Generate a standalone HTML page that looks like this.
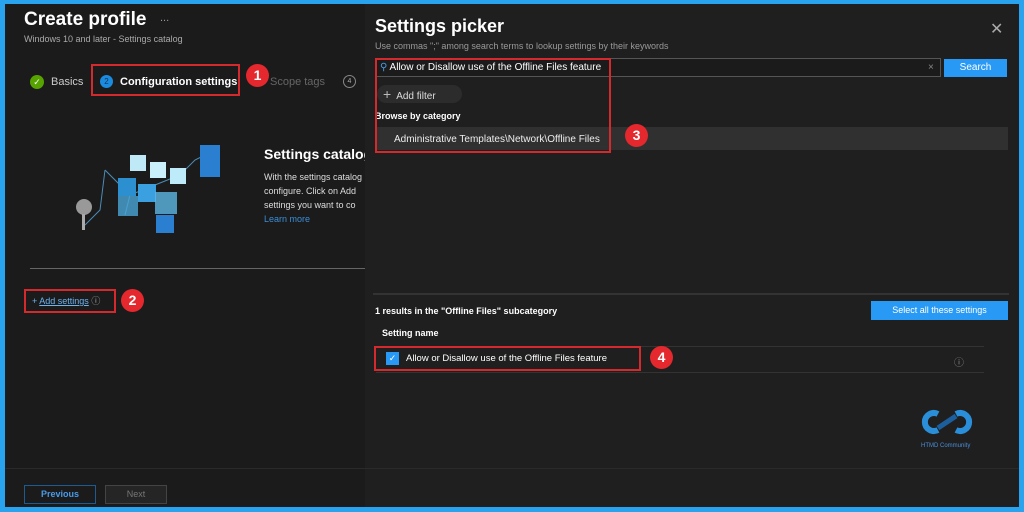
<!DOCTYPE html>
<html><head><style>
*{margin:0;padding:0;box-sizing:border-box}
body{width:1024px;height:512px;background:#2aa3ef;font-family:"Liberation Sans",sans-serif;overflow:hidden;position:relative}
.main{position:absolute;left:5px;top:4px;width:1014px;height:503px;background:#1b1b1b}
.a{position:absolute;white-space:nowrap}
.right{position:absolute;left:365px;top:4px;width:654px;height:503px;background:#1f1f1f}
.red{position:absolute;border:2px solid #d42a2e}
.badge{position:absolute;width:23px;height:23px;border-radius:50%;background:#e4282e;color:#fff;font-weight:bold;font-size:14px;text-align:center;line-height:23px}
</style></head><body>
<div class="main"></div>
<div class="a" style="left:24px;top:9px;font-size:19px;color:#fff;font-weight:bold">Create profile</div>
<div class="a" style="left:160px;top:12px;font-size:11px;color:#999">...</div>
<div class="a" style="left:24px;top:34px;font-size:9px;color:#aaa">Windows 10 and later - Settings catalog</div>
<div class="a" style="left:30px;top:75px;width:14px;height:14px;border-radius:50%;background:#57a300;color:#fff;font-size:9px;text-align:center;line-height:14px">✓</div>
<div class="a" style="left:51px;top:76px;font-size:11px;color:#ccc">Basics</div>
<div class="a" style="left:100px;top:75px;width:13px;height:13px;border-radius:50%;background:#1b8be0;color:#135;font-size:8px;text-align:center;line-height:13px">2</div>
<div class="a" style="left:120px;top:76px;font-size:11px;color:#fff;font-weight:bold">Configuration settings</div>
<div class="red" style="left:91px;top:64px;width:149px;height:32px"></div>
<div class="badge" style="left:246px;top:64px">1</div>
<div class="a" style="left:270px;top:76px;font-size:11px;color:#666">Scope tags</div>
<div class="a" style="left:343px;top:75px;width:13px;height:13px;border-radius:50%;border:1px solid #888;color:#aaa;font-size:7px;text-align:center;line-height:11px">4</div>
<svg class="a" style="left:70px;top:140px" width="155" height="95">
<g stroke="#4a8db8" stroke-width="1" fill="none"><polyline points="35,30 60,55 85,45 110,35 125,20 145,10"/><polyline points="35,30 30,70 15,85"/><polyline points="60,55 55,75"/></g>
<rect x="60" y="15" width="16" height="16" fill="#bfe9f7"/><rect x="80" y="22" width="16" height="16" fill="#c9f0fb"/><rect x="100" y="28" width="16" height="16" fill="#bdebf9"/>
<rect x="48" y="38" width="18" height="18" fill="#2c8fd0"/><rect x="68" y="44" width="18" height="18" fill="#3aa0e0"/><rect x="48" y="56" width="20" height="20" fill="#4aa6d8" opacity=".8"/><rect x="85" y="52" width="22" height="22" fill="#5cb8e4" opacity=".8"/><rect x="86" y="75" width="18" height="18" fill="#2a7fd0"/>
<rect x="130" y="5" width="20" height="32" fill="#2a7fd0"/>
<circle cx="14" cy="67" r="8" fill="#999"/><rect x="12" y="74" width="3" height="16" fill="#aaa"/></svg>
<div class="a" style="left:264px;top:146px;font-size:14px;color:#fff;font-weight:bold">Settings catalog</div>
<div class="a" style="left:264px;top:170px;font-size:9px;color:#ddd;line-height:14px">With the settings catalog<br>configure. Click on Add<br>settings you want to co</div>
<div class="a" style="left:264px;top:214px;font-size:9px;color:#3a8fd8">Learn more</div>
<div class="a" style="left:30px;top:268px;width:335px;height:1px;background:#666"></div>
<div class="a" style="left:32px;top:294px;font-size:9px;color:#6db3f0">+ <u>Add settings</u> <span style="color:#aaa">ⓘ</span></div>
<div class="red" style="left:24px;top:289px;width:92px;height:24px"></div>
<div class="badge" style="left:121px;top:289px">2</div>
<div class="a" style="left:24px;top:485px;width:72px;height:19px;border:1px solid #1d5b90;color:#4a9be8;font-size:9px;font-weight:bold;text-align:center;line-height:17px">Previous</div>
<div class="a" style="left:105px;top:485px;width:62px;height:19px;border:1px solid #444;background:#252525;color:#777;font-size:9px;text-align:center;line-height:17px">Next</div>
<div class="right"></div>
<div class="a" style="left:5px;top:468px;width:1014px;height:1px;background:#2a2a2a"></div>
<div class="a" style="left:375px;top:16px;font-size:18px;color:#fff;font-weight:bold">Settings picker</div>
<div class="a" style="left:990px;top:19px;font-size:16px;color:#aaa">✕</div>
<div class="a" style="left:375px;top:41px;font-size:9px;color:#999">Use commas ";" among search terms to lookup settings by their keywords</div>
<div class="a" style="left:375px;top:58px;width:566px;height:19px;border:1px solid #555;background:#1b1b1b"></div>
<div class="a" style="left:380px;top:62px;font-size:10px;color:#fff"><span style="color:#4a9be8">⚲</span> Allow or Disallow use of the Offline Files feature</div>
<div class="a" style="left:928px;top:62px;font-size:10px;color:#888">×</div>
<div class="a" style="left:944px;top:59px;width:63px;height:18px;background:#2899f5;color:#fff;font-size:10px;text-align:center;line-height:18px">Search</div>
<div class="a" style="left:377px;top:85px;width:85px;height:18px;border-radius:9px;background:#2c2c2c;color:#ddd;font-size:10px;line-height:18px;padding-left:6px"><span style="font-size:14px;color:#bbb">+</span>&nbsp; Add filter</div>
<div class="a" style="left:375px;top:111px;font-size:9px;color:#fff;font-weight:bold">Browse by category</div>
<div class="a" style="left:376px;top:127px;width:632px;height:23px;background:#303030"></div>
<div class="a" style="left:394px;top:134px;font-size:10px;color:#eee">Administrative Templates\Network\Offline Files</div>
<div class="red" style="left:375px;top:58px;width:236px;height:95px"></div>
<div class="badge" style="left:625px;top:124px">3</div>
<div class="a" style="left:373px;top:293px;width:636px;height:2px;background:#333"></div>
<div class="a" style="left:375px;top:306px;font-size:9px;color:#fff;font-weight:bold">1 results in the "Offline Files" subcategory</div>
<div class="a" style="left:871px;top:301px;width:137px;height:19px;background:#2899f5;color:#fff;font-size:9px;text-align:center;line-height:19px">Select all these settings</div>
<div class="a" style="left:382px;top:328px;font-size:9px;color:#fff;font-weight:bold">Setting name</div>
<div class="a" style="left:376px;top:346px;width:608px;height:1px;background:#333"></div>
<div class="a" style="left:386px;top:352px;width:13px;height:13px;background:#2899f5;color:#fff;font-size:9px;text-align:center;line-height:13px">✓</div>
<div class="a" style="left:406px;top:353px;font-size:9.5px;color:#fff">Allow or Disallow use of the Offline Files feature</div>
<div class="a" style="left:954px;top:354px;font-size:10px;color:#888">ⓘ</div>
<div class="a" style="left:376px;top:372px;width:608px;height:1px;background:#333"></div>
<div class="red" style="left:374px;top:346px;width:267px;height:25px"></div>
<div class="badge" style="left:650px;top:346px">4</div>
<svg class="a" style="left:920px;top:408px" width="58" height="30"><path d="M18 6 A9 9 0 1 0 18 22" stroke="#2a8fd8" stroke-width="6" fill="none"/><path d="M36 6 A9 9 0 1 1 36 22" stroke="#2a8fd8" stroke-width="6" fill="none"/><path d="M18 20 L36 8" stroke="#1c5f9e" stroke-width="5"/></svg>
<div class="a" style="left:921px;top:443px;font-size:6px;color:#4a8fd8">HTMD Community</div>
</body></html>
